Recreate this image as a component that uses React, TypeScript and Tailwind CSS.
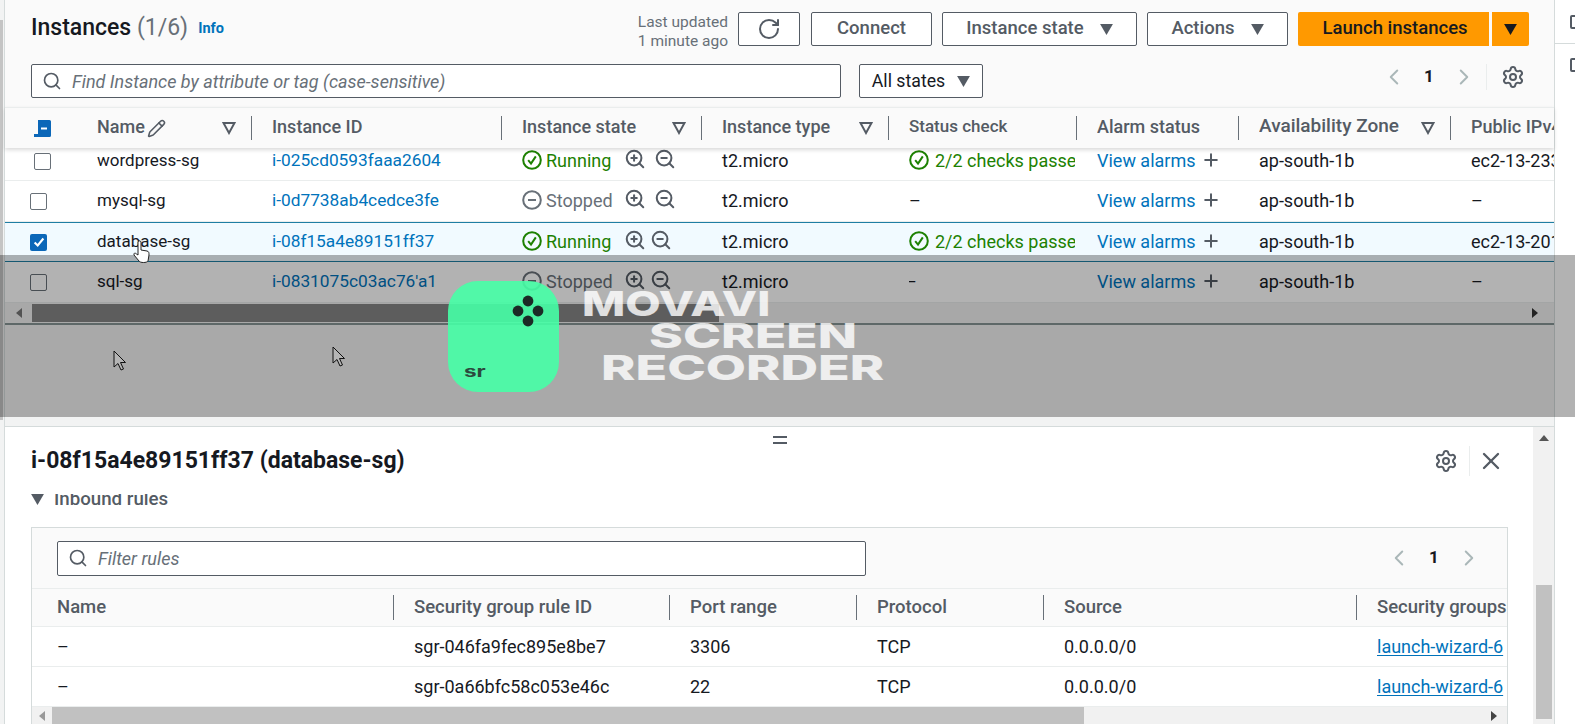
import React from "react";
import { RotateCw, Search, Settings, ZoomIn, ZoomOut, ChevronLeft, ChevronRight, X, Pencil, Plus } from "lucide-react";

const Tri = ({ cls = "" }: { cls?: string }) => (
  <svg viewBox="0 0 14 12" className={`w-[13px] h-[11px] shrink-0 ${cls}`}><path d="M0 0H14L7 12Z" fill="currentColor" /></svg>
);
const FilterTri = () => (
  <svg viewBox="0 0 14 14" className="w-[14px] h-[14px] shrink-0 text-[#545b64]"><path d="M1.5 2H12.5L7 12Z" fill="none" stroke="currentColor" strokeWidth="2" /></svg>
);
const CheckCircle = () => (
  <svg viewBox="0 0 20 20" className="w-[20px] h-[20px] shrink-0 text-[#1d8102]" fill="none" stroke="currentColor" strokeWidth="2"><circle cx="10" cy="10" r="8.8" /><path d="M6.2 10.2L9 13.6L13.8 6.4" /></svg>
);
const MinusCircle = () => (
  <svg viewBox="0 0 20 20" className="w-[20px] h-[20px] shrink-0 text-[#687078]" fill="none" stroke="currentColor" strokeWidth="2"><circle cx="10" cy="10" r="8.8" /><path d="M6 10H14" /></svg>
);
const Cursor = ({ cls }: { cls: string }) => (
  <svg viewBox="0 0 14 22" className={`absolute w-[14px] h-[22px] ${cls}`}><path d="M1 1V17L5 13.5L8 20L10.5 19L7.5 12.5H12.5Z" fill="#b5b5b5" stroke="#111" strokeWidth="1" /></svg>
);

const Box = ({ checked = false }: { checked?: boolean }) =>
  checked ? (
    <span className="w-[17px] h-[17px] rounded-[2px] bg-[#0b67b8] flex items-center justify-center">
      <svg viewBox="0 0 16 16" className="w-[14px] h-[14px]" fill="none" stroke="#fff" strokeWidth="2.4"><path d="M3 8.5L6.5 12L13 4" /></svg>
    </span>
  ) : (
    <span className="w-[17px] h-[17px] rounded-[2px] border border-[#687078] bg-white block" />
  );

const cols = "grid grid-cols-[92px_175px_250px_200px_187px_188px_162px_212px_1fr]";

const Head = ({ label, filter = false, last = false, size = "text-[18px]" }: { label: string; filter?: boolean; last?: boolean; size?: string }) => (
  <div className="flex items-center min-w-0 overflow-hidden">
    <span className={`flex-1 whitespace-nowrap overflow-hidden font-medium text-[#545b64] -mt-[3px] ${size}`}>{label}</span>
    {filter && <span className="ml-1 mr-[15px]"><FilterTri /></span>}
    {!last && <span className="w-px h-[24px] bg-[#687078] mr-[20px] shrink-0" />}
  </div>
);

type RowT = { name: string; id: string; run: boolean; h: string; selected?: boolean; ip: string; zoomGap?: string; boxShift?: string; dash?: string };
const rows: RowT[] = [
  { name: "wordpress-sg", id: "i-025cd0593faaa2604", run: true, h: "h-[33px] pb-[6px]", ip: "ec2-13-233", zoomGap: "gap-[8px]", boxShift: "ml-[29px]" },
  { name: "mysql-sg", id: "i-0d7738ab4cedce3fe", run: false, h: "h-[41px]", ip: "–", zoomGap: "gap-[8px]" },
  { name: "database-sg", id: "i-08f15a4e89151ff37", run: true, h: "h-[40px]", ip: "ec2-13-201", selected: true },
  { name: "sql-sg", id: "i-0831075c03ac76'a1", run: false, h: "h-[41px]", ip: "–", dash: "-ml-[4px]" },
];

const Row = ({ r }: { r: RowT }) => (
  <div className={`${cols} ${r.h} items-center text-[18px] whitespace-nowrap ${r.selected ? "bg-[#f1faff] border-y border-[#1f7ea3]" : "bg-white border-b border-[#eaeded]"} text-[#16191f]`}>
    <div className={r.boxShift ?? "ml-[25px]"}><Box checked={r.selected} /></div>
    <div className="text-[17px]">{r.name}</div>
    <div className="text-[#0073bb] text-[17.3px]">{r.id}</div>
    <div className={`flex items-center -mt-[2px] ${r.run ? "text-[#1d8102]" : "text-[#687078]"}`}>
      {r.run ? <CheckCircle /> : <MinusCircle />}
      <span className="ml-[4px] w-[78px]">{r.run ? "Running" : "Stopped"}</span>
      <span className={`flex text-[#545b64] ${r.zoomGap ?? "gap-[4px]"} -mt-[2px]`}><ZoomIn size={22} strokeWidth={2.2} /><ZoomOut size={22} strokeWidth={2.2} /></span>
    </div>
    <div className="-mt-[2px]">t2.micro</div>
    <div className="overflow-hidden mr-[22px] -mt-[2px]">
      {r.run ? <span className="flex items-center gap-[6px] text-[#1d8102]"><CheckCircle />2/2 checks passed</span> : <span className={`block ${r.dash ?? ""}`}>–</span>}
    </div>
    <div className="flex items-center text-[#0073bb] gap-[5px] -mt-[2px]">View alarms <Plus size={20} strokeWidth={2.4} className="text-[#545b64]" /></div>
    <div className="-mt-[2px]">ap-south-1b</div>
    <div className="overflow-hidden -mt-[2px]">{r.ip}</div>
  </div>
);

const OutBtn = ({ children, cls = "" }: { children: React.ReactNode; cls?: string }) => (
  <button className={`h-[34px] bg-white border border-[#545b64] rounded-[2px] flex items-center justify-center gap-[16px] font-medium text-[#545b64] text-[18.5px] ${cls}`}>{children}</button>
);

const Pager = ({ cls = "" }: { cls?: string }) => (
  <div className={`flex items-center text-[#aab7b8] ${cls}`}>
    <ChevronLeft size={26} strokeWidth={1.8} />
    <span className="w-[44px] text-center font-bold text-[#16191f] text-[17px]">1</span>
    <ChevronRight size={26} strokeWidth={1.8} />
  </div>
);

const rulesCols = "grid grid-cols-[357px_276px_187px_187px_313px_1fr]";
const RHead = ({ t, last = false }: { t: string; last?: boolean }) => (
  <div className="flex items-center overflow-hidden whitespace-nowrap">
    <span className="flex-1 font-medium text-[#545b64] text-[18.5px] overflow-hidden">{t}</span>
    {!last && <span className="w-px h-[25px] bg-[#687078] mr-[20px] shrink-0" />}
  </div>
);
const RRow = ({ id, port }: { id: string; port: string }) => (
  <div className={`${rulesCols} h-[40px] items-center pl-[25px] bg-white border-b border-[#eaeded] text-[18px] text-[#16191f] whitespace-nowrap`}>
    <div>–</div><div>{id}</div><div>{port}</div><div>TCP</div><div>0.0.0.0/0</div>
    <div className="overflow-hidden text-[#0073bb] underline underline-offset-2">launch-wizard-6</div>
  </div>
);

export default function App() {
  return (
    <div className="relative flex w-[1575px] h-[724px] overflow-hidden bg-white font-['Roboto','Liberation_Sans',sans-serif]">
      {/* left strip */}
      <div className="w-[5px] shrink-0 flex flex-col bg-[#f2f3f3] border-r border-[#d5dbdb]">
        <div className="h-[20px]" />
        <div className="h-[400px] bg-[#c4c4c4] w-[3px]" />
      </div>

      {/* centre */}
      <div className="w-[1549px] shrink-0 flex flex-col">
        {/* top panel */}
        <div className="h-[427px] shrink-0 bg-[#f2f3f3] border-b border-[#d5dbdb] flex flex-col">
          <div className="bg-[#fafafa] pt-[12px] pl-[26px] flex flex-col">
            <div className="flex items-center h-[34px]">
              <h1 className="text-[23px] font-medium text-[#16191f] leading-none -mt-[4px]">Instances <span className="font-normal text-[#687078]">(1/6)</span></h1>
              <a className="ml-[10px] text-[14.5px] font-bold text-[#0073bb]">Info</a>
              <div className="ml-auto mr-[10px] text-right text-[15.5px] leading-[19px] mt-[6px] text-[#687078]">Last updated<br />1 minute ago</div>
              <OutBtn cls="w-[62px]"><RotateCw size={24} strokeWidth={2} /></OutBtn>
              <OutBtn cls="w-[121px] ml-[11px]">Connect</OutBtn>
              <OutBtn cls="w-[195px] ml-[10px]">Instance state <Tri /></OutBtn>
              <OutBtn cls="w-[141px] ml-[10px]">Actions <Tri /></OutBtn>
              <button className="ml-[10px] w-[191px] h-[34px] pl-[3px] bg-[#ff9900] rounded-l-[2px] font-medium text-[18.5px] text-[#16191f]">Launch instances</button>
              <button className="ml-[3px] w-[37px] h-[34px] bg-[#ff9900] rounded-r-[2px] flex items-center justify-center text-[#16191f]"><Tri /></button>
              <div className="w-[25px]" />
            </div>
            <div className="flex items-center h-[34px] mt-[18px]">
              <div className="w-[810px] h-[34px] bg-white border border-[#545b64] rounded-[2px] flex items-center pl-[10px] gap-[10px]">
                <Search size={20} strokeWidth={2} className="text-[#545b64]" />
                <span className="italic text-[18px] text-[#687078]">Find Instance by attribute or tag (case-sensitive)</span>
              </div>
              <OutBtn cls="w-[124px] ml-[18px] !font-normal !text-[#16191f] !gap-[12px] !text-[17.7px]">All states <Tri cls="text-[#545b64]" /></OutBtn>
              <Pager cls="ml-auto -mt-[8px]" />
              <span className="ml-[9px] mr-[14px] w-px h-[26px] bg-[#eaeded] -mt-[8px]" />
              <Settings size={24} strokeWidth={2} className="text-[#545b64] mr-[29px] -mt-[8px]" />
            </div>
            <div className="h-[9px]" />
          </div>
          <div className={`${cols} h-[41px] bg-[#fafafa] border-t border-[#eaeded] shadow-[0_2px_4px_rgba(0,0,0,0.15)] relative`}>
            <div className="flex items-center pl-[29px]">
              <svg viewBox="0 0 17 17" className="w-[17px] h-[17px]"><path d="M4 0H15.5Q17 0 17 1.500V15.500Q17 17 15.500 17H0V14H4Z" fill="#0b67b8" /><rect x="7" y="7.500" width="6" height="2" fill="#fff" /></svg>
            </div>
            <div className="flex items-center">
              <span className="font-medium text-[#545b64] text-[18px] -mt-[3px]">Name</span>
              <Pencil size={19} strokeWidth={2} className="ml-[2px] text-[#545b64]" />
              <span className="ml-auto mr-[15px]"><FilterTri /></span>
              <span className="w-px h-[24px] bg-[#687078] mr-[20px]" />
            </div>
            <Head label="Instance ID" />
            <Head label="Instance state" filter />
            <Head label="Instance type" filter />
            <Head label="Status check" size="text-[17px]" />
            <Head label="Alarm status" />
            <Head label="Availability Zone" filter size="text-[19px]" />
            <Head label="Public IPv4 DNS" last />
          </div>
          <div className="flex flex-col">
            {rows.map((r) => <Row key={r.id} r={r} />)}
          </div>
          <div className="h-[19px] flex items-center bg-[#f1f1f1]">
            <span className="w-[27px] flex justify-center"><span className="w-0 h-0 border-y-[5px] border-y-transparent border-r-[6px] border-r-[#777]" /></span>
            <span className="w-[687px] h-[18px] bg-[#868686]" />
            <span className="ml-auto mr-[16px] w-0 h-0 border-y-[5px] border-y-transparent border-l-[6px] border-l-[#333]" />
          </div>
          <div className="h-[2px] mt-[1px] bg-[#879596]" />
        </div>

        {/* bottom panel */}
        <div className="flex-1 flex min-h-0">
          <div className="w-[1528px] shrink-0 flex flex-col bg-white overflow-hidden">
            <div className="h-[8px] mt-[9px] flex flex-col justify-between items-center pl-[21px]">
              <span className="w-[14px] h-[2px] bg-[#545b64]" />
              <span className="w-[14px] h-[2px] bg-[#545b64]" />
            </div>
            <div className="flex items-center h-[36px] -mt-[1px] pl-[26px]">
              <h2 className="text-[23px] font-bold text-[#16191f]">i-08f15a4e89151ff37 (database-sg)</h2>
              <Settings size={24} strokeWidth={2} className="ml-auto text-[#545b64]" />
              <span className="ml-[11px] w-px h-[30px] bg-[#eaeded]" />
              <X size={28} strokeWidth={2} className="ml-[7px] mr-[28px] text-[#545b64]" />
            </div>
            <div className="flex items-start h-[13px] mt-[15px] pl-[26px] overflow-hidden">
              <Tri cls="text-[#545b64]" />
              <span className="ml-[10px] font-medium text-[18.7px] leading-[24px] text-[#545b64] -mt-[7px]">Inbound rules</span>
            </div>
            <div className="mt-[20px] ml-[26px] w-[1477px] flex-1 border-x border-t border-[#d5dbdb] flex flex-col bg-[#fafafa]">
              <div className="h-[61px] flex items-center pl-[25px] border-b border-[#eaeded] shrink-0">
                <div className="w-[809px] h-[35px] bg-white border border-[#545b64] rounded-[2px] flex items-center pl-[10px] gap-[10px]">
                  <Search size={20} strokeWidth={2} className="text-[#545b64]" />
                  <span className="italic text-[18px] text-[#687078]">Filter rules</span>
                </div>
                <Pager cls="ml-auto mr-[25px]" />
              </div>
              <div className={`${rulesCols} h-[38px] pl-[25px] border-b border-[#eaeded] shrink-0`}>
                <RHead t="Name" /><RHead t="Security group rule ID" /><RHead t="Port range" /><RHead t="Protocol" /><RHead t="Source" /><RHead t="Security groups" last />
              </div>
              <RRow id="sgr-046fa9fec895e8be7" port="3306" />
              <RRow id="sgr-0a66bfc58c053e46c" port="22" />
              <div className="flex-1 flex items-stretch bg-[#f1f1f1]">
                <span className="w-[20px] flex justify-center items-center"><span className="w-0 h-0 border-y-[5px] border-y-transparent border-r-[6px] border-r-[#999]" /></span>
                <span className="w-[1032px] bg-[#c1c1c1]" />
                <span className="ml-auto mr-[10px] self-center w-0 h-0 border-y-[5px] border-y-transparent border-l-[6px] border-l-[#444]" />
              </div>
            </div>
          </div>
          {/* vertical scrollbar */}
          <div className="w-[21px] flex flex-col items-center bg-[#f1f1f1]">
            <span className="mt-[8px] w-0 h-0 border-x-[5px] border-x-transparent border-b-[6px] border-b-[#555]" />
            <span className="mt-[144px] w-[16px] h-[134px] bg-[#c1c1c1]" />
          </div>
        </div>
      </div>

      {/* right strip */}
      <div className="flex-1 border-l border-[#d5dbdb] bg-white flex flex-col pl-[15px]">
        <div className="h-[44px] flex items-center -ml-[15px] pl-[15px] border-b border-[#d5dbdb]">
          <span className="w-[10px] h-[14px] border-2 border-[#545b64] rounded-[2px]" />
        </div>
        <span className="mt-[14px] w-[10px] h-[14px] border-2 border-[#545b64] rounded-[2px]" />
      </div>

      {/* recording watermark */}
      <div className="absolute left-0 right-0 top-[255px] h-[162px] bg-black/30" />
      <Cursor cls="left-[113px] top-[350px]" />
      <Cursor cls="left-[332px] top-[346px]" />
      <svg viewBox="0 0 18 24" className="absolute left-[133px] top-[240px] w-[18px] h-[24px]"><path d="M5 2C5 0.5 8 0.5 8 2V10L14 11C16 11.5 16 13 16 15L15 21C14 23 7 23 6 21L1 15C0.5 13 2 12.5 3.5 14L5 15Z" fill="#fff" stroke="#222" strokeWidth="1" /></svg>
      <div className="absolute left-[448px] top-[281px] w-[111px] h-[111px] rounded-[30px] bg-[#46ffa6]/90 flex flex-col justify-end pl-[16px] pb-[13px]">
        <svg viewBox="0 0 32 32" className="absolute left-[64px] top-[14px] w-[32px] h-[32px]" fill="#1c2a26"><circle cx="16" cy="6" r="5.4" /><circle cx="6" cy="16" r="5.4" /><circle cx="26" cy="16" r="5.4" /><circle cx="16" cy="26" r="5.4" /></svg>
        <span className="font-['Inter',sans-serif] font-bold text-[15px] leading-none text-[#2c4a3e] scale-x-[1.5] origin-left">sr</span>
      </div>
      <div className="absolute left-[582px] top-[288px] font-['Inter',sans-serif] font-extrabold text-[34px] leading-[32px] text-white/80 whitespace-nowrap">
        <div className="origin-left scale-x-[1.35]">MOVAVI</div>
        <div className="origin-left scale-x-[1.51] ml-[67px]">SCREEN</div>
        <div className="origin-left scale-x-[1.53] ml-[19px]">RECORDER</div>
      </div>
    </div>
  );
}
